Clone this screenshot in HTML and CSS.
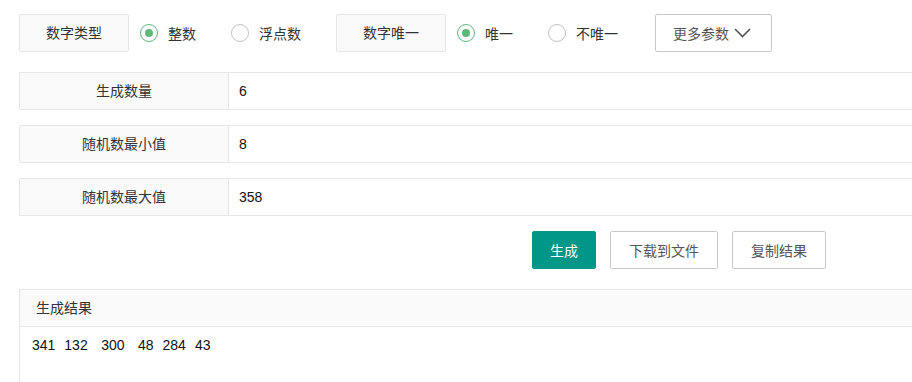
FILE: index.html
```html
<!DOCTYPE html>
<html lang="zh-CN">
<head>
<meta charset="utf-8">
<title>随机数生成</title>
<link rel="stylesheet" href="styles.css">
</head>
<body>
<div class="page">
  <div class="opts">
    <div class="tag">数字类型</div>
    <div class="radio on"><span class="dot"></span><span class="rt">整数</span></div>
    <div class="radio"><span class="dot"></span><span class="rt">浮点数</span></div>
    <div class="tag">数字唯一</div>
    <div class="radio on"><span class="dot"></span><span class="rt">唯一</span></div>
    <div class="radio"><span class="dot"></span><span class="rt">不唯一</span></div>
    <button class="more">更多参数
      <svg class="chev" width="17" height="10" viewBox="0 0 17 10"><path d="M1 1 L8.5 8.5 L16 1" fill="none" stroke="#555" stroke-width="1.6"/></svg>
    </button>
  </div>

  <div class="field"><div class="flabel">生成数量</div><div class="fval">6</div></div>
  <div class="field"><div class="flabel">随机数最小值</div><div class="fval">8</div></div>
  <div class="field"><div class="flabel">随机数最大值</div><div class="fval">358</div></div>

  <div class="actions">
    <button class="btn primary">生成</button>
    <button class="btn">下载到文件</button>
    <button class="btn">复制结果</button>
  </div>

  <div class="panel">
    <div class="phead">生成结果</div>
    <div class="pbody">341  132   300   48  284  43</div>
  </div>
</div>
</body>
</html>
```
FILE: styles.css
```css
* { box-sizing: border-box; }
html, body { margin: 0; padding: 0; background: #fff; overflow: hidden; }
body {
  font-family: "Liberation Sans", "Noto Sans CJK SC", sans-serif;
  font-size: 14px;
  color: #333;
}
.page {
  width: 1100px;
  padding: 14px 0 0 19px;
}
.opts {
  display: flex;
  align-items: center;
  height: 38px;
}
.tag {
  width: 110px;
  height: 38px;
  line-height: 36px;
  text-align: center;
  background: #fafafa;
  border: 1px solid #e6e6e6;
  border-radius: 2px;
  margin-right: 11px;
}
.radio {
  display: flex;
  align-items: center;
  margin-right: 35px;
}
.dot {
  width: 18px;
  height: 18px;
  border: 1.5px solid #c2c2c2;
  border-radius: 50%;
  margin-right: 10px;
  display: flex;
  align-items: center;
  justify-content: center;
}
.radio.on .dot { border-color: #5fb878; }
.radio.on .dot::after {
  content: "";
  width: 8px;
  height: 8px;
  border-radius: 50%;
  background: #5fb878;
}
.more {
  font-family: inherit;
  font-size: 14px;
  color: #555;
  background: #fff;
  border: 1px solid #c9c9c9;
  border-radius: 2px;
  height: 38px;
  width: 117px;
  padding: 0 0 0 17px;
  display: flex;
  align-items: center;
  margin-left: 2px;
  cursor: pointer;
}
.chev { margin-left: 5px; }
.field {
  display: flex;
  height: 38px;
  margin-top: 20px;
  border: 1px solid #e6e6e6;
  border-right: none;
  border-radius: 2px 0 0 2px;
}
.field + .field { margin-top: 15px; }
.flabel {
  width: 209px;
  background: #fafafa;
  border-right: 1px solid #e6e6e6;
  text-align: center;
  line-height: 36px;
}
.fval {
  flex: 1;
  padding-left: 10px;
  line-height: 36px;
  color: #111;
}
.actions {
  display: flex;
  gap: 14px;
  margin-top: 15px;
  padding-left: 513px;
}
.btn {
  font-family: inherit;
  font-size: 14px;
  height: 38px;
  padding: 0 18px;
  background: #fff;
  color: #555;
  border: 1px solid #c9c9c9;
  border-radius: 2px;
  cursor: pointer;
}
.btn.primary {
  background: #009688;
  border-color: #009688;
  color: #fff;
  width: 64px;
  padding: 0;
}
.panel {
  margin-top: 20px;
  border: 1px solid #e6e6e6;
  border-right: none;
  height: 120px;
}
.phead {
  height: 37px;
  line-height: 36px;
  padding-left: 16px;
  background: #fafafa;
  border-bottom: 1px solid #e6e6e6;
}
.pbody {
  padding: 8px 12px;
  line-height: 20px;
  white-space: pre;
  word-spacing: 0.6px;
  color: #111;
}
```
